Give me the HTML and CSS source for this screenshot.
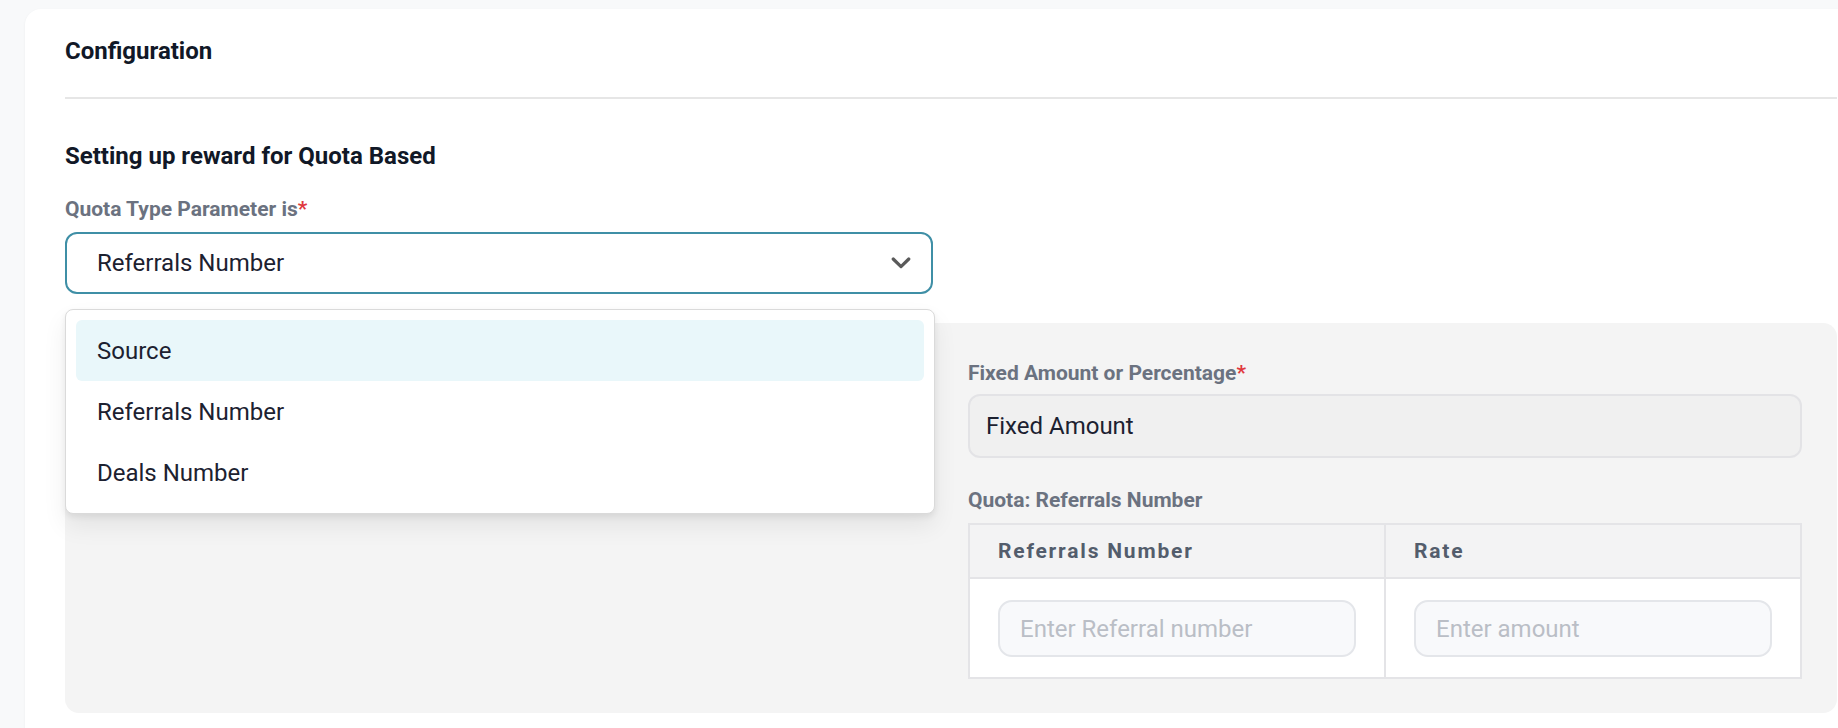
FILE: index.html
```html
<!DOCTYPE html>
<html lang="en">
<head>
<meta charset="utf-8">
<title>Configuration</title>
<link rel="stylesheet" href="styles.css">
</head>
<body>
<div class="card">
  <div class="card-header">
    <h2 class="card-title">Configuration</h2>
  </div>
  <div class="section">
    <h3 class="section-title">Setting up reward for Quota Based</h3>
    <div class="field-label top-label">Quota Type Parameter is<span class="req">*</span></div>
    <div class="select-wrap">
      <div class="select">
        <span class="select-value">Referrals Number</span>
        <svg class="chevron" width="20" height="12" viewBox="0 0 20 12"><polyline points="2.2,2 10,9.6 17.8,2" fill="none" stroke="#5a5a5a" stroke-width="3.2" stroke-linecap="round" stroke-linejoin="round"/></svg>
      </div>
      <div class="menu">
        <div class="menu-item active">Source</div>
        <div class="menu-item">Referrals Number</div>
        <div class="menu-item">Deals Number</div>
      </div>
    </div>
    <div class="panel">
      <div class="panel-col"></div>
      <div class="panel-col">
        <div class="field-label">Fixed Amount or Percentage<span class="req">*</span></div>
        <div class="readonly-input">Fixed Amount</div>
        <div class="field-label quota-label">Quota: Referrals Number</div>
        <table class="quota-table">
          <thead>
            <tr><th>Referrals Number</th><th>Rate</th></tr>
          </thead>
          <tbody>
            <tr>
              <td><input class="cell-input" type="text" placeholder="Enter Referral number"></td>
              <td><input class="cell-input" type="text" placeholder="Enter amount"></td>
            </tr>
          </tbody>
        </table>
      </div>
    </div>
  </div>
</div>
</body>
</html>
```
FILE: styles.css
```css
html, body {
  margin: 0;
  padding: 0;
}
body {
  background: #f8f9fa;
  font-family: Roboto, "Liberation Sans", sans-serif;
  color: #1c2130;
  overflow: hidden;
  height: 728px;
}
.card {
  margin: 9px 0 0 25px;
  width: 1852px;
  min-height: 719px;
  box-sizing: border-box;
  padding: 0 40px;
  background: #ffffff;
  border-radius: 16px 16px 0 0;
  box-shadow: 0 1px 3px rgba(0, 0, 0, 0.05);
}
.card-header {
  padding: 24px 0 28px;
  border-bottom: 2px solid #e6e6e6;
}
.card-title {
  margin: 0;
  font-size: 24px;
  line-height: 36px;
  font-weight: 700;
  color: #111827;
}
.section {
  padding-top: 39px;
}
.section-title {
  margin: 0;
  font-size: 24px;
  line-height: 36px;
  font-weight: 700;
  color: #111827;
}
.field-label {
  font-size: 21px;
  line-height: 30px;
  font-weight: 700;
  color: #6b7280;
}
.top-label {
  margin-top: 20px;
}
.req {
  color: #e0393e;
}
.select-wrap {
  position: relative;
  width: 868px;
  margin-top: 8px;
}
.select {
  height: 62px;
  box-sizing: border-box;
  border: 2px solid #3f8fa6;
  border-radius: 12px;
  background: #ffffff;
  display: flex;
  align-items: center;
  justify-content: space-between;
  padding: 0 20px 0 30px;
  font-size: 24px;
  color: #1c2130;
}
.chevron {
  display: block;
}
.menu {
  position: absolute;
  top: 77px;
  left: 0;
  width: 870px;
  box-sizing: border-box;
  padding: 10px;
  background: #ffffff;
  border: 1px solid #dadada;
  border-radius: 8px;
  box-shadow: 0 12px 24px rgba(0, 0, 0, 0.07), 0 3px 6px rgba(0, 0, 0, 0.07);
  z-index: 5;
}
.menu-item {
  height: 61px;
  display: flex;
  align-items: center;
  padding-left: 21px;
  border-radius: 6px;
  font-size: 24px;
  color: #1c2130;
}
.menu-item.active {
  background: #e9f7fa;
}
.panel {
  margin-top: 29px;
  background: #f4f4f4;
  border-radius: 14px;
  padding: 35px 35px 34px;
  display: grid;
  grid-template-columns: 1fr 1fr;
  gap: 34px;
}
.readonly-input {
  margin-top: 6px;
  height: 64px;
  box-sizing: border-box;
  border: 2px solid #e3e3e6;
  border-radius: 12px;
  background: #f0f0f0;
  display: flex;
  align-items: center;
  padding-left: 16px;
  font-size: 24px;
  color: #1c2130;
}
.quota-label {
  margin-top: 27px;
}
.quota-table {
  margin-top: 8px;
  width: 100%;
  table-layout: fixed;
  border-collapse: collapse;
}
.quota-table th,
.quota-table td {
  border: 2px solid #e4e4e7;
}
.quota-table th {
  height: 52px;
  padding: 0 28px;
  text-align: left;
  background: #f3f3f4;
  font-size: 21px;
  font-weight: 700;
  letter-spacing: 1.8px;
  color: #535d6c;
}
.quota-table td {
  background: #ffffff;
  padding: 21px 28px 20px;
}
.cell-input {
  display: block;
  width: 100%;
  height: 57px;
  box-sizing: border-box;
  border: 2px solid #e4e6ea;
  border-radius: 14px;
  background: #f8f9fb;
  padding: 0 20px;
  font-family: Roboto, "Liberation Sans", sans-serif;
  font-size: 24px;
  color: #1c2130;
  outline: none;
}
.cell-input::placeholder {
  color: #babec6;
}
```
